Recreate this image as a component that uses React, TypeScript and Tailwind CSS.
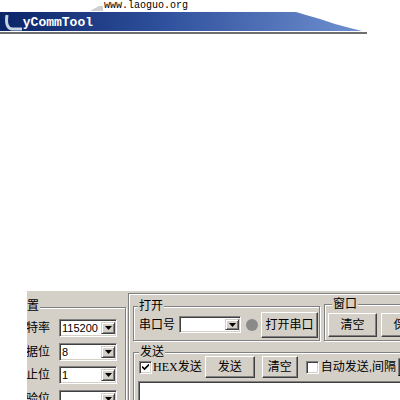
import React from 'react';

const font = "font-['Liberation_Sans','Noto_Sans_CJK_SC',sans-serif]";

function Combo({ value, w, h = 18 }: { value: string; w: number; h?: number }) {
  return (
    <div
      className="shrink-0 flex items-center bg-white border border-t-[#808080] border-l-[#808080] border-b-white border-r-white shadow-[inset_1px_1px_0_#404040,inset_-1px_-1px_0_#d4d0c8] py-[2px] pl-[2px] pr-[1px]"
      style={{ width: w, height: h }}
    >
      <span className="flex-1 text-[11px] leading-[12px] text-black whitespace-nowrap overflow-hidden">{value}</span>
      <span className="w-[14px] h-full shrink-0 flex items-center justify-center bg-[#d4d0c8] border border-t-[#d4d0c8] border-l-[#d4d0c8] border-r-[#404040] border-b-[#404040] shadow-[inset_1px_1px_0_#fff,inset_-1px_-1px_0_#808080]">
        <svg width="7" height="4" viewBox="0 0 7 4">
          <path d="M0 0h7L3.5 4z" fill="#000" />
        </svg>
      </span>
    </div>
  );
}

function Button({ label, w, h }: { label: string; w: number; h: number }) {
  return (
    <div
      className="shrink-0 flex items-center justify-center bg-[#d4d0c8] border border-t-white border-l-white border-r-[#404040] border-b-[#404040] shadow-[inset_-1px_-1px_0_#808080] text-[12px] leading-[12px] text-black"
      style={{ width: w, height: h }}
    >
      {label}
    </div>
  );
}

function Check({ checked }: { checked?: boolean }) {
  return (
    <div className="shrink-0 w-[13px] h-[13px] bg-white border border-t-[#808080] border-l-[#808080] border-b-white border-r-white shadow-[inset_1px_1px_0_#404040,inset_-1px_-1px_0_#d4d0c8] flex items-center justify-center">
      {checked && (
        <svg width="7" height="7" viewBox="0 0 7 7">
          <path d="M0 2.5 L2.5 5 L7 0.5" stroke="#000" strokeWidth="1.6" fill="none" />
        </svg>
      )}
    </div>
  );
}

function Group({ label, labelLeft, labelTop = -7, className, children }: { label: string; labelLeft: number; labelTop?: number; className: string; children?: React.ReactNode }) {
  return (
    <div className={`relative shrink-0 border border-[#808080] shadow-[inset_1px_1px_0_#fff,1px_1px_0_#fff] ${className}`}>
      <span
        className="absolute px-[1px] bg-[#d4d0c8] text-[12px] leading-[12px] text-black whitespace-nowrap"
        style={{ left: labelLeft, top: labelTop }}
      >
        {label}
      </span>
      {children}
    </div>
  );
}

const rows = [
  { label: '波特率', value: '115200', mt: 11 },
  { label: '数据位', value: '8', mt: 6 },
  { label: '停止位', value: '1', mt: 5 },
  { label: '校验位', value: '', mt: 6 },
];

export default function App() {
  return (
    <div className={`w-[400px] h-[400px] bg-white overflow-hidden ${font}`}>
      <header className="relative h-[35px]">
        <svg className="absolute left-0 top-0" width="400" height="35" viewBox="0 0 400 35">
          <defs>
            <linearGradient id="band" x1="0" y1="0" x2="1" y2="0">
              <stop offset="0" stopColor="#0a2468" />
              <stop offset="0.45" stopColor="#2f509c" />
              <stop offset="1" stopColor="#6f90cf" />
            </linearGradient>
          </defs>
          <polygon points="90,11 99,6 103,6 103,11" fill="#cfcfcf" />
          <polygon points="0,12 296,12 306,15 320,19 335,24 350,28 362,31 0,31" fill="url(#band)" />
          <rect x="0" y="32" width="367" height="2" fill="#6e6e6e" />
        </svg>
        <div className="relative pl-[104px] pt-[1px] text-[10px] leading-[10px] text-black font-['Liberation_Mono',monospace]">
          www.laoguo.org
        </div>
        <div className="relative pl-[15px] pt-[5px] text-[13px] leading-[13px] font-bold text-white font-['Liberation_Mono',monospace]">
          <span className="text-[#12296a]">M</span>yCommTool
        </div>
        <svg className="absolute left-0 top-0" width="30" height="35" viewBox="0 0 30 35">
          <path d="M7 15 Q5 28 12 29 L22 29" stroke="#c4d2e2" strokeWidth="3" fill="none" />
          <path d="M3 17 L6 13" stroke="#1a2a5a" strokeWidth="1.5" />
        </svg>
      </header>

      <div className="ml-[27px] mt-[256px] w-[373px] h-[109px] bg-[#d4d0c8] overflow-hidden flex items-start">
        {/* 串口设置 */}
        <Group label="串口设置" labelLeft={2} labelTop={-8} className="ml-[-40px] mt-[16px] w-[139px] h-[120px]">
          <div className="flex flex-col">
            {rows.map((r) => (
              <div key={r.label} className="flex items-center h-[18px]" style={{ marginTop: r.mt }}>
                <span className="w-[62px] text-right text-[12px] leading-[12px] text-black">{r.label}</span>
                <div className="ml-[9px]">
                  <Combo value={r.value} w={58} />
                </div>
              </div>
            ))}
          </div>
        </Group>

        <div className="ml-[2px] mt-[2px] w-[300px] h-[120px] shrink-0 border-l border-t border-[#808080] shadow-[inset_1px_1px_0_#fff] flex flex-col">
          <div className="flex items-start">
            {/* 打开 */}
            <Group label="打开" labelLeft={4} className="ml-[4px] mt-[12px] w-[187px] h-[35px]">
              <div className="flex items-center pl-[5px] pt-[4px] h-[31px]">
                <span className="text-[12px] leading-[12px] text-black">串口号</span>
                <div className="ml-[4px]">
                  <Combo value="" w={62} h={17} />
                </div>
                <span className="ml-[5px] w-[12px] h-[12px] rounded-full bg-[#8a8a8a] shrink-0" />
                <div className="ml-[3px]">
                  <Button label="打开串口" w={57} h={26} />
                </div>
              </div>
            </Group>
            {/* 窗口 */}
            <Group label="窗口" labelLeft={7} className="ml-[4px] mt-[10px] w-[120px] h-[37px]">
              <div className="flex items-center gap-[4px] pl-[3px] pt-[8px]">
                <Button label="清空" w={49} h={24} />
                <Button label="保存" w={49} h={24} />
              </div>
            </Group>
          </div>

          {/* 发送 */}
          <Group label="发送" labelLeft={5} className="ml-[4px] mt-[11px] w-[300px] h-[60px]">
            <div className="flex items-center pl-[5px] pt-[3px] h-[25px]">
              <Check checked />
              <span className="ml-[1px] text-[12px] leading-[12px] text-black">
                <span className="font-['Liberation_Serif',serif]">HEX</span>发送
              </span>
              <div className="ml-[3px]">
                <Button label="发送" w={50} h={22} />
              </div>
              <div className="ml-[7px]">
                <Button label="清空" w={36} h={22} />
              </div>
              <div className="ml-[8px]">
                <Check />
              </div>
              <span className="ml-[2px] text-[12px] leading-[12px] text-black whitespace-nowrap">自动发送,间隔</span>
              <div className="ml-[2px] w-[30px] h-[18px] bg-white border border-t-[#808080] border-l-[#808080] shadow-[inset_1px_1px_0_#404040] shrink-0" />
            </div>
            <div className="ml-[4px] mt-[3px] h-[40px] bg-white border border-t-[#808080] border-l-[#808080] shadow-[inset_1px_1px_0_#404040]" />
          </Group>
        </div>
      </div>
    </div>
  );
}
